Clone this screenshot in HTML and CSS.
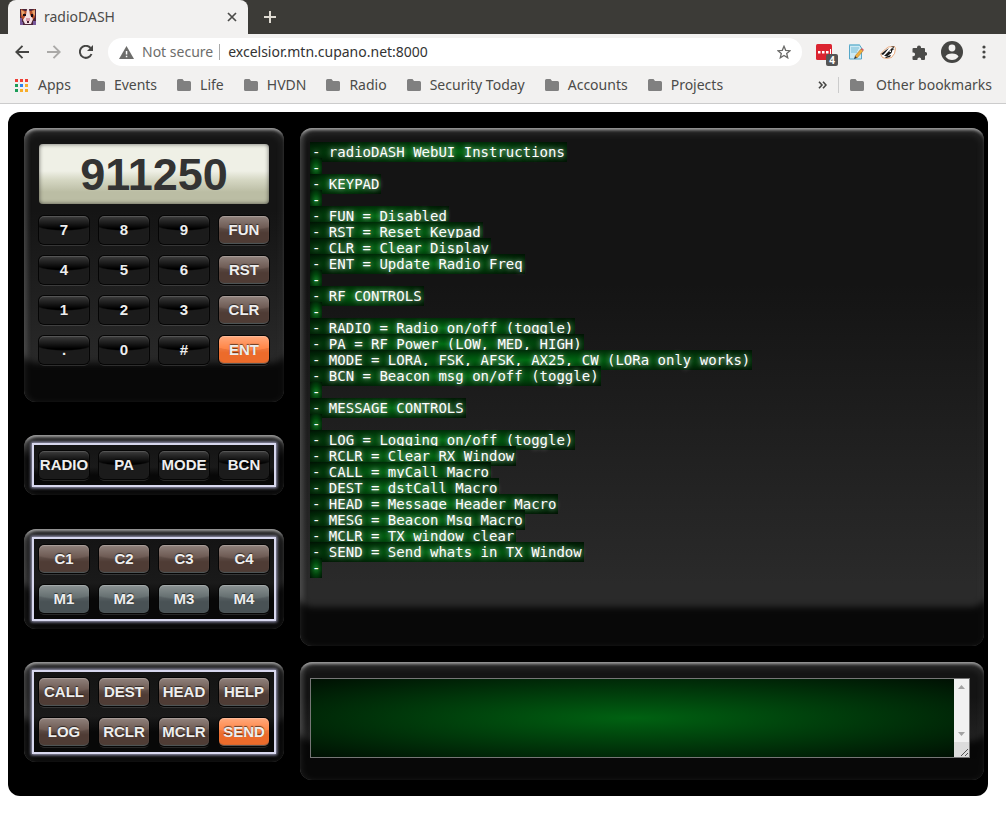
FILE: index.html
```html
<!DOCTYPE html>
<html lang="en">
<head>
<meta charset="utf-8">
<title>radioDASH</title>
<link rel="stylesheet" href="styles.css">
</head>
<body>
<svg class="defs" width="0" height="0" aria-hidden="true">
  <symbol id="folder" viewBox="0 0 14 12"><path fill="#808080" d="M1.500 0h4l1.500 2h5.500q1.500 0 1.500 1.500v7q0 1.500-1.500 1.500h-11Q0 12 0 10.500v-9Q0 0 1.500 0z"/></symbol>
</svg>
<header class="browser">
  <div class="tabs">
    <div class="tab">
      <svg width="16" height="16" viewBox="0 0 16 16"><path fill="#4a2438" d="M0 0h16v16H0z"/><path fill="#b8532c" d="M1 0l4 2h6l4-2v8l-3 4-4 3-4-3-3-4z"/><path fill="#e9a56e" d="M1 1l4 2-3 4zM12 2l3-1v6l-2-2z"/><path fill="#f3dfe2" d="M7 0h2l1 6 3 4-2 5H5l-2-4 3-5z"/><path fill="#170c14" d="M3 5h3v2H3zM11 5h2v3h-2z"/><path fill="#d79aa6" d="M6 9h4v3H6z"/><path fill="#4a2030" d="M7 12h2v2H7z"/><path fill="#785a9c" d="M0 9h2v4h1v3H0zM13 12h3v4h-3z"/></svg>
      <span class="tab-title">radioDASH</span>
      <button class="icon-btn" aria-label="Close tab"><svg width="10" height="10" viewBox="0 0 10 10"><path d="M1 1l8 8M9 1l-8 8" stroke="#4b4b49" stroke-width="1.700"/></svg></button>
    </div>
    <button class="icon-btn" aria-label="New tab"><svg width="12" height="12" viewBox="0 0 12 12"><path d="M6 0v12M0 6h12" stroke="#dfdbd2" stroke-width="2"/></svg></button>
  </div>
  <div class="toolbar">
    <div class="nav">
      <button class="icon-btn" aria-label="Back"><svg width="14" height="14" viewBox="0 0 14 14"><path d="M14 7H1.500M7.500 .8L1.300 7l6.200 6.200" fill="none" stroke="#454543" stroke-width="1.900"/></svg></button>
      <button class="icon-btn" aria-label="Forward"><svg width="14" height="14" viewBox="0 0 14 14"><path d="M0 7h12.500M6.500 .8L12.700 7l-6.200 6.200" fill="none" stroke="#aaa9a7" stroke-width="1.900"/></svg></button>
      <button class="icon-btn" aria-label="Reload"><svg width="14" height="14" viewBox="0 0 14 14"><path d="M12.500 9A6 6 0 1 1 11.500 3" fill="none" stroke="#454543" stroke-width="2"/><path d="M14 0v6H8z" fill="#454543"/></svg></button>
    </div>
    <div class="omnibox">
      <svg width="15" height="13" viewBox="0 0 15 13"><path fill="#6d6d6b" d="M7.500 0L15 13H0z"/><path fill="#fff" d="M6.800 5h1.500v3.500H6.800zM6.800 9.700h1.500v1.500H6.800z"/></svg>
      <span class="insecure">Not secure</span>
      <label class="address"><input type="text" aria-label="Address" value="excelsior.mtn.cupano.net:8000"></label>
      <button class="icon-btn" aria-label="Bookmark"><svg width="14" height="14" viewBox="0 0 14 14"><path d="M7 1.300l1.700 4 4.300.4-3.300 2.800 1 4.300L7 10.500l-3.700 2.300 1-4.300L1 5.700l4.300-.4z" fill="none" stroke="#6a6a68" stroke-width="1.300"/></svg></button>
    </div>
    <div class="extensions">
      <button class="icon-btn ext-red" aria-label="Password manager"><svg width="22" height="23" viewBox="0 0 22 23"><rect width="16" height="16" y="3" rx="1.500" fill="#db2430"/><path fill="#fff" d="M2 10h2.500v2.500H2zM6 10h2.500v2.500H6zM10 10h2.500v2.500H10zM14 8h1v5h-1z"/></svg><span class="badge">4</span></button>
      <button class="icon-btn" aria-label="Notes"><svg width="16" height="16" viewBox="0 0 16 16"><path fill="#cdeaf4" stroke="#56a7c8" d="M1.500 1h10l2 3v11h-12z"/><path fill="none" stroke="#77bdd6" d="M1 1h11M3 4h8M3 6h7M3 8h6"/><path d="M7 12l6-7 2 2-6 7z" fill="#eeb03d" stroke="#a56a25" stroke-width=".5"/><path d="M13 5l1-1 2 2-1 1z" fill="#d85a63"/><path d="M7 12l2 2-3 1z" fill="#333"/></svg></button>
      <button class="icon-btn" aria-label="Privacy extension"><svg width="16" height="14" viewBox="0 0 16 14"><path fill="#fff" stroke="#e58a48" stroke-width=".7" d="M.5 9l5-5 3-2 6-.5 1 2-1 5-3 4-5 1-4-1z"/><path fill="#191919" d="M1 9l5-4 3-2-4 5-2 2zM4 11l4-4 4-4 2.500 1-2 1-1 3-4 3zM11 1.500h3.500l-1 1.500zM5 12l6-2-1 2-4 1z"/><path fill="#fff" d="M9.500 5.500h1.500v1.500H9.500z"/></svg></button>
      <button class="icon-btn puzzle" aria-label="Extensions"><svg width="15" height="15" viewBox="0 0 15 15"><path fill="#4b4b49" d="M1.500 3H5V2.500a2 2 0 0 1 4 0V3h3q1 0 1 1v3h.2a1.900 1.900 0 0 1 0 3.800H13V14q0 1-1 1H9.200v-.7a1.900 1.900 0 0 0-3.800 0v.7H1.500q-1 0-1-1v-2.800h.7a1.900 1.900 0 0 0 0-3.800H.5V4q0-1 1-1z"/></svg></button>
      <button class="icon-btn profile" aria-label="Profile"><svg width="22" height="22" viewBox="0 0 22 22"><circle cx="11" cy="11" r="11" fill="#454543"/><circle cx="11" cy="7" r="3.400" fill="#f2f1f0"/><path fill="#f2f1f0" d="M4.500 15.500Q6 12.600 11 12.600t6.500 2.900Q15 19 11 19t-6.500-3.500z"/></svg></button>
      <button class="icon-btn" aria-label="Menu"><svg width="4" height="14" viewBox="0 0 4 14"><g fill="#454543"><circle cx="2" cy="2" r="1.600"/><circle cx="2" cy="7" r="1.600"/><circle cx="2" cy="12" r="1.600"/></g></svg></button>
    </div>
  </div>
  <nav class="bookmarks">
    <a href="#"><svg width="14" height="13" viewBox="0 0 14 13"><path fill="#ee3f35" d="M0 0h3v3H0zM5 0h3v3H5zM10 0h3v3h-3z"/><path fill="#1c9d58" d="M0 5h3v3H0zM0 10h3v3H0z"/><path fill="#2d82ee" d="M5 5h3v3H5z"/><path fill="#f8ae2b" d="M10 5h3v3h-3zM5 10h3v3H5zM10 10h3v3h-3z"/></svg>Apps</a>
    <a href="#"><svg width="14" height="12"><use href="#folder"/></svg>Events</a>
    <a href="#"><svg width="14" height="12"><use href="#folder"/></svg>Life</a>
    <a href="#"><svg width="14" height="12"><use href="#folder"/></svg>HVDN</a>
    <a href="#"><svg width="14" height="12"><use href="#folder"/></svg>Radio</a>
    <a href="#"><svg width="14" height="12"><use href="#folder"/></svg>Security Today</a>
    <a href="#"><svg width="14" height="12"><use href="#folder"/></svg>Accounts</a>
    <a href="#"><svg width="14" height="12"><use href="#folder"/></svg>Projects</a>
    <button class="icon-btn overflow" aria-label="More bookmarks"><svg width="9" height="8" viewBox="0 0 9 8"><path d="M1 .7L4 4 1 7.300M5 .7L8 4 5 7.300" fill="none" stroke="#454543" stroke-width="1.600"/></svg></button>
    <a href="#" class="other"><svg width="14" height="12"><use href="#folder"/></svg>Other bookmarks</a>
  </nav>
</header>
<main class="dash">
  <div class="controls">
    <section class="panel keypad">
      <output class="display">911250</output>
      <div class="keys">
        <button class="key">7</button><button class="key">8</button><button class="key">9</button><button class="key brown">FUN</button>
        <button class="key">4</button><button class="key">5</button><button class="key">6</button><button class="key brown">RST</button>
        <button class="key">1</button><button class="key">2</button><button class="key">3</button><button class="key brown">CLR</button>
        <button class="key">.</button><button class="key">0</button><button class="key">#</button><button class="key orange">ENT</button>
      </div>
    </section>
    <section class="panel group">
      <div class="keys framed">
        <button class="key">RADIO</button><button class="key">PA</button><button class="key">MODE</button><button class="key">BCN</button>
      </div>
    </section>
    <section class="panel group">
      <div class="keys framed">
        <button class="key brown">C1</button><button class="key brown">C2</button><button class="key brown">C3</button><button class="key brown">C4</button>
        <button class="key slate">M1</button><button class="key slate">M2</button><button class="key slate">M3</button><button class="key slate">M4</button>
      </div>
    </section>
    <section class="panel group">
      <div class="keys framed">
        <button class="key brown">CALL</button><button class="key brown">DEST</button><button class="key brown">HEAD</button><button class="key brown">HELP</button>
        <button class="key brown">LOG</button><button class="key brown">RCLR</button><button class="key brown">MCLR</button><button class="key orange">SEND</button>
      </div>
    </section>
  </div>
  <div class="windows">
    <section class="panel receive">
      <div class="log">
        <span>- radioDASH WebUI Instructions</span><br>
        <span>-</span><br>
        <span>- KEYPAD</span><br>
        <span>-</span><br>
        <span>- FUN = Disabled</span><br>
        <span>- RST = Reset Keypad</span><br>
        <span>- CLR = Clear Display</span><br>
        <span>- ENT = Update Radio Freq</span><br>
        <span>-</span><br>
        <span>- RF CONTROLS</span><br>
        <span>-</span><br>
        <span>- RADIO = Radio on/off (toggle)</span><br>
        <span>- PA = RF Power (LOW, MED, HIGH)</span><br>
        <span>- MODE = LORA, FSK, AFSK, AX25, CW (LORa only works)</span><br>
        <span>- BCN = Beacon msg on/off (toggle)</span><br>
        <span>-</span><br>
        <span>- MESSAGE CONTROLS</span><br>
        <span>-</span><br>
        <span>- LOG = Logging on/off (toggle)</span><br>
        <span>- RCLR = Clear RX Window</span><br>
        <span>- CALL = myCall Macro</span><br>
        <span>- DEST = dstCall Macro</span><br>
        <span>- HEAD = Message Header Macro</span><br>
        <span>- MESG = Beacon Msg Macro</span><br>
        <span>- MCLR = TX window clear</span><br>
        <span>- SEND = Send whats in TX Window</span><br>
        <span>-</span>
      </div>
    </section>
    <section class="panel transmit">
      <div class="editor">
        <textarea aria-label="TX window"></textarea>
        <div class="scrollbar">
          <button class="icon-btn" aria-label="Scroll up"><svg width="15" height="16" viewBox="0 0 15 16"><path d="M4 10l3.500-4L11 10z" fill="#a3a3a3"/></svg></button>
          <button class="icon-btn" aria-label="Scroll down"><svg width="15" height="16" viewBox="0 0 15 16"><path d="M4 6l3.500 4L11 6z" fill="#a3a3a3"/></svg></button>
          <svg class="grip" width="15" height="15" viewBox="0 0 15 15"><path d="M7 14l7-7M11 14l3-3" stroke="#555" fill="none"/></svg>
        </div>
      </div>
    </section>
  </div>
</main>
</body>
</html>
```
FILE: styles.css
```css
* { box-sizing: border-box; }
body { margin: 0; background: #fff; font-family: "Liberation Sans", Arial, sans-serif; }
svg { display: block; flex: none; }
.defs { position: absolute; }
.icon-btn { display: flex; flex: none; align-items: center; padding: 0; border: 0; background: none; }

.browser { background: #f2f1f0; border-bottom: 1px solid #ccc; color: #4b4b49; font: 14px/20px "Noto Sans", "Open Sans", sans-serif; }
.tabs { display: flex; align-items: center; gap: 16px; height: 34px; padding-left: 8px; background: #3c3b37; }
.tab { display: flex; align-items: center; gap: 8px; width: 240px; height: 34px; padding: 0 11px 0 12px; border-radius: 8px 8px 0 0; background: #f2f1f0; }
.tab-title { flex: 1; }
.toolbar { display: flex; align-items: center; height: 36px; padding: 0 20px 0 15px; }
.nav { display: flex; gap: 18px; margin-right: 15px; }
.omnibox { display: flex; flex: 1; align-items: center; height: 28px; padding: 0 11px; border-radius: 14px; background: #fff; }
.insecure { margin-left: 8px; color: #6d6d6b; }
.address { flex: 1; margin-left: 6px; padding-left: 8px; border-left: 1px solid #aaa; line-height: 16px; }
.address input { display: block; width: 100%; height: 16px; padding: 0; border: 0; outline: 0; background: none; color: #333; font: inherit; }
.extensions { display: flex; align-items: center; gap: 16px; margin-left: 14px; }
.ext-red { position: relative; margin-right: -6px; }
.puzzle { margin-right: -2px; }
.profile { margin-right: 3px; }
.badge { position: absolute; right: 0; bottom: -2px; width: 12px; height: 12px; border-radius: 2px; background: #555; color: #fff; font: bold 10px/12px "Noto Sans", sans-serif; text-align: center; }
.bookmarks { display: flex; align-items: center; gap: 20px; height: 33px; padding: 0 14px 3px 15px; }
.bookmarks a { display: flex; align-items: center; gap: 9px; color: inherit; text-decoration: none; white-space: nowrap; }
.bookmarks .overflow { margin-left: auto; margin-right: -9px; }
.bookmarks .other { gap: 12px; padding-left: 11px; border-left: 1px solid #ccc; line-height: 16px; }

.dash { display: flex; gap: 16px; margin: 8px 18px 26px 8px; padding: 16px 4px 16px 16px; border-radius: 12px; background: #000; }
.controls { display: flex; flex: none; flex-direction: column; justify-content: space-between; width: 260px; padding-bottom: 18px; }
.windows { display: flex; flex: 1; flex-direction: column; gap: 16px; min-width: 0; }
.panel {
  border-radius: 12px;
  background: linear-gradient(#141414 30%, #2a2a2a 88%);
  box-shadow: inset 0 -39px 6px 0 rgba(0, 0, 0, .8), inset 0 3px 3px -1px rgba(255, 255, 255, .45), inset 0 4px 10px rgba(255, 255, 255, .15), inset 2px 0 5px rgba(255, 255, 255, .3);
}
.keypad { padding: 16px 15px 38px; }
.display {
  display: block; height: 60px; margin-bottom: 12px; border-radius: 4px;
  background: linear-gradient(#eff0e6 45%, #d5d7c3 60%, #bbbda4 80%);
  box-shadow: inset 0 0 4px rgba(0, 0, 0, .6);
  color: #333; font-weight: bold; font-size: 45px; line-height: 62px; text-align: center;
}
.keys { display: grid; grid-template-columns: repeat(4, 50px); justify-content: space-between; row-gap: 12px; }
.key {
  height: 28px; padding: 0; border: 0; border-radius: 5px;
  background: linear-gradient(rgba(255, 255, 255, .24), transparent 45%), radial-gradient(ellipse 42px 15px at 50% 0, #000 92%, transparent), #1b1b1b;
  box-shadow: 0 0 0 1px #050505, 0 2px 0 rgba(255, 255, 255, .13), inset 0 1px 1px rgba(255, 255, 255, .15);
  color: #eee; font: bold 15px/28px "Liberation Sans", Arial, sans-serif; text-align: center; white-space: nowrap; text-shadow: 0 -1px 1px rgba(0, 0, 0, .6);
}
.brown { background: linear-gradient(rgba(255, 255, 255, .3), transparent 60%), radial-gradient(ellipse 42px 15px at 50% 0, #604b43 90%, transparent), #4f3c35; }
.slate { background: linear-gradient(rgba(255, 255, 255, .3), transparent 60%), radial-gradient(ellipse 42px 15px at 50% 0, #586364 90%, transparent), #495255; }
.orange { background: linear-gradient(rgba(255, 255, 255, .35), transparent 60%), radial-gradient(ellipse 42px 15px at 50% 0, #ff7a35 96%, transparent), #ec6b2b; }
.brown, .slate, .orange { box-shadow: 0 0 0 1px #050505, 0 2px 0 rgba(255, 255, 255, .13), inset 0 1px 1px rgba(255, 255, 255, .25), inset 0 -2px 1px -1px #4d5658; }
.group { padding: 8px; }
.framed { padding: 6px 5px; border: 2px solid #d7d7ee; box-shadow: 0 0 3px 1px #a5a5c4; background: linear-gradient(#141414, #1a1a1a 55%, #080808 75%); }

.receive { min-height: 518px; padding: 16px 10px 38px; }
.log { color: #fff; font: 14px/16px "DejaVu Sans Mono", monospace; text-shadow: 0 0 5px #c8c8c8; }
.log span { padding: 2px; background: radial-gradient(rgba(0, 136, 24, .8), #000 120%) #000; }
.transmit { padding: 16px 14px 22px 10px; }
.editor { display: flex; height: 80px; border: 1px solid #767676; }
.editor textarea {
  flex: 1; min-width: 0; padding: 2px; border: 0; outline: 0; resize: none;
  background: radial-gradient(rgba(0, 122, 22, .8), #000 120%) #000;
  color: #fff; font: 14px/16px "DejaVu Sans Mono", monospace;
}
.scrollbar { display: flex; flex: none; flex-direction: column; justify-content: space-between; background: #f1f1f1; }
.scrollbar .icon-btn:first-child { margin-bottom: auto; }
.grip { background: #dcdcdc; }
```
